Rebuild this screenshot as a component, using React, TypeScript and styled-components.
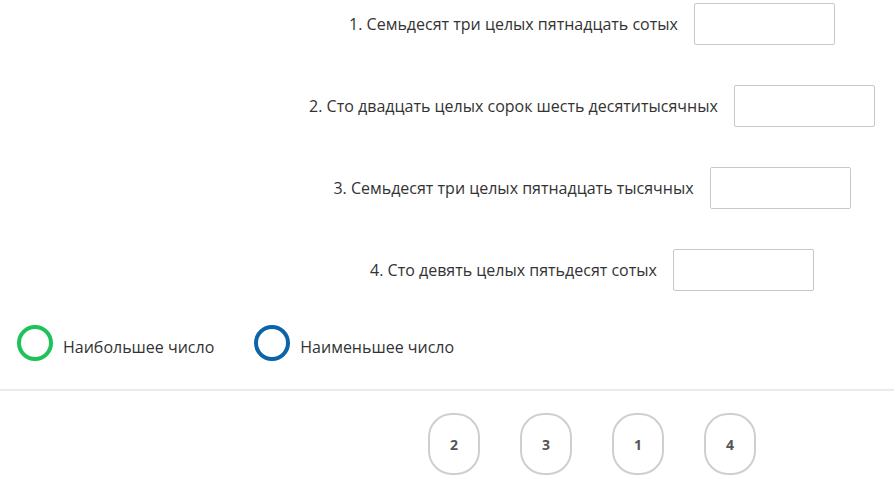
import styled, { createGlobalStyle } from 'styled-components'

const GlobalStyle = createGlobalStyle`
  html, body {
    margin: 0;
    padding: 0;
    background: #ffffff;
    font-family: 'Open Sans', 'Noto Sans', sans-serif;
    color: #333333;
  }
`

const Page = styled.div`
  width: 894px;
  height: 502px;
  overflow: hidden;
  background: #fff;
`

const Tasks = styled.div`
  display: flex;
  flex-direction: column;
  align-items: center;
  gap: 40px;
  padding: 3px 0 0 290px;
`

const TaskRow = styled.div`
  display: flex;
  align-items: center;
  gap: 16px;
`

const TaskText = styled.span`
  font-size: 16px;
  color: #333;
  white-space: nowrap;
`

const AnswerBox = styled.div`
  width: 139px;
  height: 40px;
  border: 1px solid #c8c8c8;
  border-radius: 2px;
  background: #fff;
`

const Legend = styled.div`
  display: flex;
  align-items: center;
  gap: 40px;
  padding: 32px 0 0 17px;
  height: 40px;
`

const LegendItem = styled.div`
  display: flex;
  align-items: center;
  gap: 10px;
`

const LegendLabel = styled.span`
  font-size: 16px;
  color: #333;
  padding-top: 8px;
`

const Ring = styled.span<{ $color: string }>`
  display: block;
  width: 28px;
  height: 28px;
  border: 4px solid ${p => p.$color};
  border-radius: 50%;
`

const Divider = styled.div`
  margin-top: 26px;
  height: 2px;
  background: #ebebeb;
`

const Chips = styled.div`
  display: flex;
  justify-content: center;
  gap: 40px;
  padding: 22px 0 0 290px;
`

const Chip = styled.div`
  width: 48px;
  height: 58px;
  border: 2px solid #cfcfcf;
  border-radius: 24px;
  display: flex;
  align-items: center;
  justify-content: center;
  font-size: 14px;
  font-weight: 700;
  color: #555;
`

const tasks = [
  '1. Семьдесят три целых пятнадцать сотых',
  '2. Сто двадцать целых сорок шесть десятитысячных',
  '3. Семьдесят три целых пятнадцать тысячных',
  '4. Сто девять целых пятьдесят сотых',
]

export default function App() {
  return (
    <Page>
      <GlobalStyle />
      <Tasks>
        {tasks.map(t => (
          <TaskRow key={t}>
            <TaskText>{t}</TaskText>
            <AnswerBox />
          </TaskRow>
        ))}
      </Tasks>
      <Legend>
        <LegendItem>
          <Ring $color="#1fc15a" />
          <LegendLabel>Наибольшее число</LegendLabel>
        </LegendItem>
        <LegendItem>
          <Ring $color="#0b64a8" />
          <LegendLabel>Наименьшее число</LegendLabel>
        </LegendItem>
      </Legend>
      <Divider />
      <Chips>
        {['2', '3', '1', '4'].map(n => (
          <Chip key={n}>{n}</Chip>
        ))}
      </Chips>
    </Page>
  )
}
